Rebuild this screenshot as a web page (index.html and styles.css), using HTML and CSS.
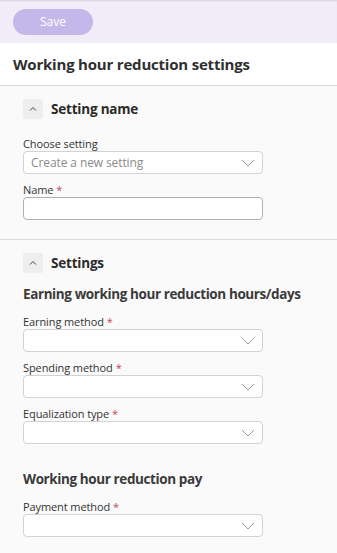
FILE: index.html
```html
<!DOCTYPE html>
<html>
<head>
<meta charset="utf-8">
<link rel="stylesheet" href="styles.css">
</head>
<body>
<div class="page">
  <div class="toolbar">
    <button class="save">Save</button>
  </div>
  <div class="titlebar">
    <h1 class="title">Working hour reduction settings</h1>
  </div>
  <section class="section">
    <div class="sec-head">
      <span class="toggle"><svg width="10" height="10" viewBox="0 0 10 10"><path d="M2 6.5 L5 3.5 L8 6.5" fill="none" stroke="#444" stroke-width="1"/></svg></span>
      <h2 class="sec-title">Setting name</h2>
    </div>
    <div class="field">
      <label class="label">Choose setting</label>
      <div class="select"><span class="placeholder">Create a new setting</span><svg class="chev" width="14" height="8" viewBox="0 0 14 8"><path d="M1 1 L7 7 L13 1" fill="none" stroke="#999" stroke-width="1"/></svg></div>
    </div>
    <div class="field">
      <label class="label">Name<span class="req">*</span></label>
      <div class="input"></div>
    </div>
  </section>
  <section class="section">
    <div class="sec-head">
      <span class="toggle"><svg width="10" height="10" viewBox="0 0 10 10"><path d="M2 6.5 L5 3.5 L8 6.5" fill="none" stroke="#444" stroke-width="1"/></svg></span>
      <h2 class="sec-title">Settings</h2>
    </div>
    <h3 class="sub">Earning working hour reduction hours/days</h3>
    <div class="field">
      <label class="label">Earning method<span class="req">*</span></label>
      <div class="select"><span></span><svg class="chev" width="14" height="8" viewBox="0 0 14 8"><path d="M1 1 L7 7 L13 1" fill="none" stroke="#999" stroke-width="1"/></svg></div>
    </div>
    <div class="field">
      <label class="label">Spending method<span class="req">*</span></label>
      <div class="select"><span></span><svg class="chev" width="14" height="8" viewBox="0 0 14 8"><path d="M1 1 L7 7 L13 1" fill="none" stroke="#999" stroke-width="1"/></svg></div>
    </div>
    <div class="field">
      <label class="label">Equalization type<span class="req">*</span></label>
      <div class="select"><span></span><svg class="chev" width="14" height="8" viewBox="0 0 14 8"><path d="M1 1 L7 7 L13 1" fill="none" stroke="#999" stroke-width="1"/></svg></div>
    </div>
    <h3 class="sub sub2">Working hour reduction pay</h3>
    <div class="field">
      <label class="label">Payment method<span class="req">*</span></label>
      <div class="select"><span></span><svg class="chev" width="14" height="8" viewBox="0 0 14 8"><path d="M1 1 L7 7 L13 1" fill="none" stroke="#999" stroke-width="1"/></svg></div>
    </div>
  </section>
</div>
</body>
</html>
```
FILE: styles.css
```css
html, body {
  margin: 0;
  padding: 0;
  background: #fafafa;
}
body {
  font-family: "Open Sans", "Noto Sans", sans-serif;
  color: #333;
}
.page {
  width: 337px;
}
.toolbar {
  height: 43px;
  background: #f1edf8;
  box-shadow: inset 0 2px 2px -1px #d6d4dc;
  display: flex;
  align-items: center;
  padding-left: 13px;
  box-sizing: border-box;
}
.save {
  width: 80px;
  height: 26px;
  border: none;
  border-radius: 13px;
  background: #c4b7e9;
  color: #fff;
  font-family: "Open Sans", sans-serif;
  font-size: 12px;
  padding: 0;
}
.titlebar {
  background: #fff;
  height: 42px;
  border-bottom: 1px solid #d9d9d9;
  display: flex;
  align-items: center;
  padding-left: 13px;
}
.title {
  margin: 0;
  font-size: 15px;
  font-weight: 700;
  color: #2f2f2f;
  letter-spacing: -0.2px;
}
.section {
  padding: 13px 0 10px 23px;
  border-bottom: 1px solid #dadada;
}
.section:last-child {
  border-bottom: none;
}
.sec-head {
  display: flex;
  align-items: center;
  gap: 8px;
  height: 20px;
  margin-bottom: 18px;
}
.toggle {
  width: 20px;
  height: 20px;
  background: #eeeeee;
  border-radius: 2px;
  display: flex;
  align-items: center;
  justify-content: center;
}
.sec-title {
  margin: 0;
  font-size: 13.5px;
  font-weight: 700;
  color: #2a2a2a;
  letter-spacing: -0.2px;
}
.field {
  width: 240px;
  margin-bottom: 9px;
}
.label {
  display: block;
  font-size: 11px;
  color: #333;
  line-height: 14px;
  letter-spacing: -0.1px;
}
.req {
  color: #c0475b;
  margin-left: 3px;
}
.select, .input {
  box-sizing: border-box;
  height: 23px;
  background: #fff;
  border: 1px solid #d2d2d2;
  border-radius: 4px;
  display: flex;
  align-items: center;
  justify-content: space-between;
  padding: 0 5px 0 7px;
}
.input {
  border-color: #b0b0b0;
}
.placeholder {
  font-size: 12px;
  color: #8a8a8a;
  letter-spacing: -0.1px;
}
.chev {
  display: block;
  margin-right: 2px;
}
.sub {
  margin: 12px 0 12px;
  font-size: 13.5px;
  font-weight: 700;
  color: #3a3a3a;
  letter-spacing: -0.4px;
  line-height: 18px;
  white-space: nowrap;
}
.sec-head + .sub {
  margin-top: -6px;
}
.sub2 {
  margin-top: 26px;
  margin-bottom: 12px;
}
```
